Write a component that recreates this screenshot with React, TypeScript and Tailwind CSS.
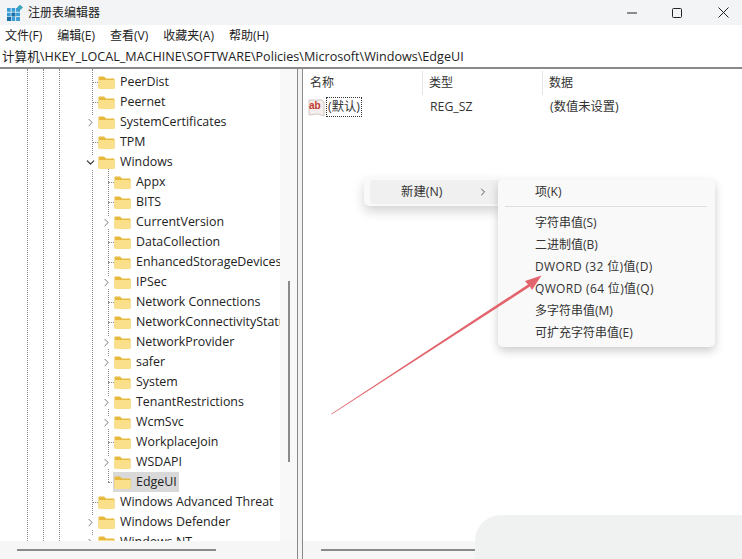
import { ChevronDown, ChevronRight } from "lucide-react";

const FONT = "[font-family:'Open_Sans','Noto_Sans_CJK_SC',sans-serif]";

type Row = { label: string; level: 1 | 2; arrow?: "right" | "down"; selected?: boolean };

const rows: Row[] = [
  { label: "PeerDist", level: 1 },
  { label: "Peernet", level: 1 },
  { label: "SystemCertificates", level: 1, arrow: "right" },
  { label: "TPM", level: 1 },
  { label: "Windows", level: 1, arrow: "down" },
  { label: "Appx", level: 2 },
  { label: "BITS", level: 2 },
  { label: "CurrentVersion", level: 2, arrow: "right" },
  { label: "DataCollection", level: 2 },
  { label: "EnhancedStorageDevices", level: 2 },
  { label: "IPSec", level: 2, arrow: "right" },
  { label: "Network Connections", level: 2 },
  { label: "NetworkConnectivityStatus", level: 2 },
  { label: "NetworkProvider", level: 2, arrow: "right" },
  { label: "safer", level: 2, arrow: "right" },
  { label: "System", level: 2 },
  { label: "TenantRestrictions", level: 2, arrow: "right" },
  { label: "WcmSvc", level: 2, arrow: "right" },
  { label: "WorkplaceJoin", level: 2 },
  { label: "WSDAPI", level: 2, arrow: "right" },
  { label: "EdgeUI", level: 2, selected: true },
  { label: "Windows Advanced Threat", level: 1 },
  { label: "Windows Defender", level: 1, arrow: "right" },
  { label: "Windows NT", level: 1, arrow: "right" },
];

function Folder() {
  return (
    <svg width="17" height="15" viewBox="0 0 17 15" className="shrink-0">
      <path d="M0.5 2.5a1 1 0 0 1 1-1h4.5l2 2h7.5a1 1 0 0 1 1 1v8a1 1 0 0 1-1 1h-14a1 1 0 0 1-1-1z" fill="#e8b93f" />
      <path d="M0.5 5h16v8a1 1 0 0 1-1 1h-14a1 1 0 0 1-1-1z" fill="#fbe08c" />
    </svg>
  );
}

function RegeditIcon() {
  return (
    <svg width="18" height="18" viewBox="0 0 18 18" className="shrink-0">
      <rect x="1" y="4" width="13" height="13" fill="#3a9bd5" />
      <path d="M5.2 4v13M9.6 4v13M1 8.3h13M1 12.6h13" stroke="#e8f4fb" strokeWidth="0.9" />
      <rect x="1" y="12.8" width="4" height="4.2" fill="#1d6fa8" />
      <rect x="5.6" y="8.7" width="3.8" height="3.8" fill="#1d6fa8" />
      <path d="M14 0.8l3 2.6-3 2.8-3-2.8z" fill="#38a6b8" />
    </svg>
  );
}

function TreeRow({ row }: { row: Row }) {
  const indent = row.level === 1 ? "pl-[84px]" : "pl-[100px]";
  return (
    <div className={`flex h-5 shrink-0 items-center ${indent}`}>
      {row.arrow ? (
        <span className="relative z-10 flex w-[14px] shrink-0 bg-white text-[#777]">
          {row.arrow === "right" ? (
            <ChevronRight size={13} strokeWidth={1.8} />
          ) : (
            <ChevronDown size={13} strokeWidth={2.2} className="text-[#333]" />
          )}
        </span>
      ) : (
        <span className="flex w-[14px] shrink-0 justify-end">
          <span className="w-[6px] border-t border-dotted border-[#888]" />
        </span>
      )}
      <span className={`flex h-5 items-center ${row.selected ? "-ml-[1px] bg-[#d9d9d9] pl-[1px] pr-[2px]" : ""}`}>
        <Folder />
        <span className="ml-[5px] whitespace-nowrap text-[12.4px] text-[#222]">{row.label}</span>
      </span>
    </div>
  );
}

const subItems = ["字符串值(S)", "二进制值(B)", "DWORD (32 位)值(D)", "QWORD (64 位)值(Q)", "多字符串值(M)", "可扩充字符串值(E)"];

export default function App() {
  return (
    <div className={`relative flex h-[559px] w-[742px] flex-col overflow-hidden bg-white text-[#222] ${FONT}`}>
      {/* title bar */}
      <div className="flex h-[25px] shrink-0 items-center bg-[#f3f4f5] pl-[6px] text-[12px]">
        <RegeditIcon />
        <span className="ml-[4px]">注册表编辑器</span>
        <div className="ml-auto flex items-center gap-[35px] pr-[13px] text-[#222]">
          <svg width="10" height="11" viewBox="0 0 10 11"><path d="M0 6h10" stroke="#222" strokeWidth="1" /></svg>
          <svg width="10" height="10" viewBox="0 0 10 10"><rect x="0.5" y="0.5" width="9" height="9" rx="1" fill="none" stroke="#222" /></svg>
          <svg width="11" height="11" viewBox="0 0 11 11" className="ml-px"><path d="M0.5 0.5l10 10M10.5 0.5l-10 10" stroke="#222" strokeWidth="1" /></svg>
        </div>
      </div>

      {/* menu bar */}
      <div className="flex h-[22px] shrink-0 items-center gap-[15px] pl-[5px] text-[12px]">
        <span>文件(F)</span>
        <span>编辑(E)</span>
        <span>查看(V)</span>
        <span>收藏夹(A)</span>
        <span>帮助(H)</span>
      </div>

      {/* address bar */}
      <div className="flex h-[22px] shrink-0 items-center border-b-2 border-[#8a8a8a] pl-[2px] text-[12.6px]">
        计算机\HKEY_LOCAL_MACHINE\SOFTWARE\Policies\Microsoft\Windows\EdgeUI
      </div>

      <div className="flex min-h-0 flex-1">
        {/* tree pane */}
        <div className="flex w-[297px] shrink-0 flex-col">
          <div className="flex min-h-0 flex-1">
            <div className="relative flex w-[280px] flex-col overflow-hidden pt-[3px]">
              <span className="absolute inset-y-0 left-[27px] border-l border-dotted border-[#888]" />
              <span className="absolute inset-y-0 left-[43px] border-l border-dotted border-[#888]" />
              <span className="absolute inset-y-0 left-[59px] border-l border-dotted border-[#888]" />
              <span className="absolute inset-y-0 left-[92px] border-l border-dotted border-[#888]" />
              <span className="absolute left-[108px] top-[100px] h-[313px] border-l border-dotted border-[#888]" />
              {rows.map((row) => (
                <TreeRow key={row.label} row={row} />
              ))}
            </div>
            <div className="flex w-[17px] justify-center bg-[#f8f8f8] pl-[1px]">
              <span className="mt-[212px] h-[181px] w-[2px] bg-[#8a8a8a]" />
            </div>
          </div>
          <div className="flex h-[18px] shrink-0 items-center bg-[#f6f6f6] pl-[17px]">
            <span className="h-[2px] w-[199px] bg-[#8a8a8a]" />
          </div>
        </div>

        {/* splitter */}
        <div className="w-[6px] shrink-0 border-x border-[#8a8a8a] bg-[#f3f3f3]" />

        {/* value pane */}
        <div className="flex min-w-0 flex-1 flex-col">
          <div className="flex h-[27px] shrink-0 items-start pt-[2px] text-[12px] text-[#333]">
            <span className="h-[24px] w-[120px] border-r border-[#e5e5e5] pl-[7px] leading-[24px]">名称</span>
            <span className="h-[24px] w-[120px] border-r border-[#e5e5e5] pl-[6px] leading-[24px]">类型</span>
            <span className="pl-[6px] leading-[24px]">数据</span>
          </div>
          <div className="flex h-[22px] shrink-0 items-center text-[12.3px] text-[#333]">
            <div className="flex w-[120px] items-center pl-[5px]">
              <svg width="17" height="19" viewBox="0 0 17 19" className="shrink-0">
                <path d="M1 2h13l2 2v14l-6-2-9 1z" fill="#f4efec" stroke="#c9bcb8" strokeWidth="0.8" />
                <text x="1" y="11" fontSize="10" fontWeight="700" fill="#c0392b" fontFamily="'Liberation Sans',sans-serif">ab</text>
              </svg>
              <span className="ml-[1px] border border-dotted border-[#333] px-[1px] leading-[18px]">(默认)</span>
            </div>
            <span className="w-[120px] pl-[7px]">REG_SZ</span>
            <span className="pl-[7px]">(数值未设置)</span>
          </div>
          <div className="flex-1" />
          <div className="flex h-[18px] shrink-0 items-center bg-[#f6f6f6] pl-[18px]">
            <span className="h-[2px] w-[160px] bg-[#8a8a8a]" />
          </div>
        </div>
      </div>

      {/* context menu */}
      <div className="absolute left-[364px] top-[178px] h-[28px] w-[136px] rounded-l-[5px] bg-[#f9f9f9] p-[2px] pl-[6px] shadow-[0_5px_12px_rgba(0,0,0,0.18)]">
        <div className="flex h-full items-center rounded-l-[4px] bg-[#f0f0f0] text-[12.4px] text-[#333]">
          <span className="ml-[31px]">新建(N)</span>
          <ChevronRight size={12} strokeWidth={1.6} className="ml-[35px]" />
        </div>
      </div>
      <div className="absolute left-[498px] top-[179px] flex h-[168px] w-[217px] flex-col rounded-[5px] bg-[#f9f9f9] pl-[37px] text-[12px] text-[#333] shadow-[0_4px_10px_rgba(0,0,0,0.2)]">
        <span className="flex h-[26px] items-center">项(K)</span>
        <span className="-ml-[30px] mr-[8px] mb-[5px] mt-[1px] border-t border-[#ddd]" />
        {subItems.map((item) => (
          <span
            key={item}
            className={`flex h-[22px] items-center whitespace-nowrap ${item.includes("WORD") ? "tracking-[0.35px]" : ""}`}
          >
            {item}
          </span>
        ))}
      </div>

      {/* red annotation arrow */}
      <svg width="742" height="559" viewBox="0 0 742 559" className="pointer-events-none absolute left-0 top-0">
        <path d="M331 414L528 284.5L525 281L541.5 275.5L532 290L530 286.5L331.5 414.5z" fill="#e2646c" />
      </svg>

      {/* blurred patch in the corner */}
      <div className="absolute left-[475px] top-[515px] h-[60px] w-[290px] rounded-tl-[26px] bg-[#f0f1f1]" />
    </div>
  );
}
